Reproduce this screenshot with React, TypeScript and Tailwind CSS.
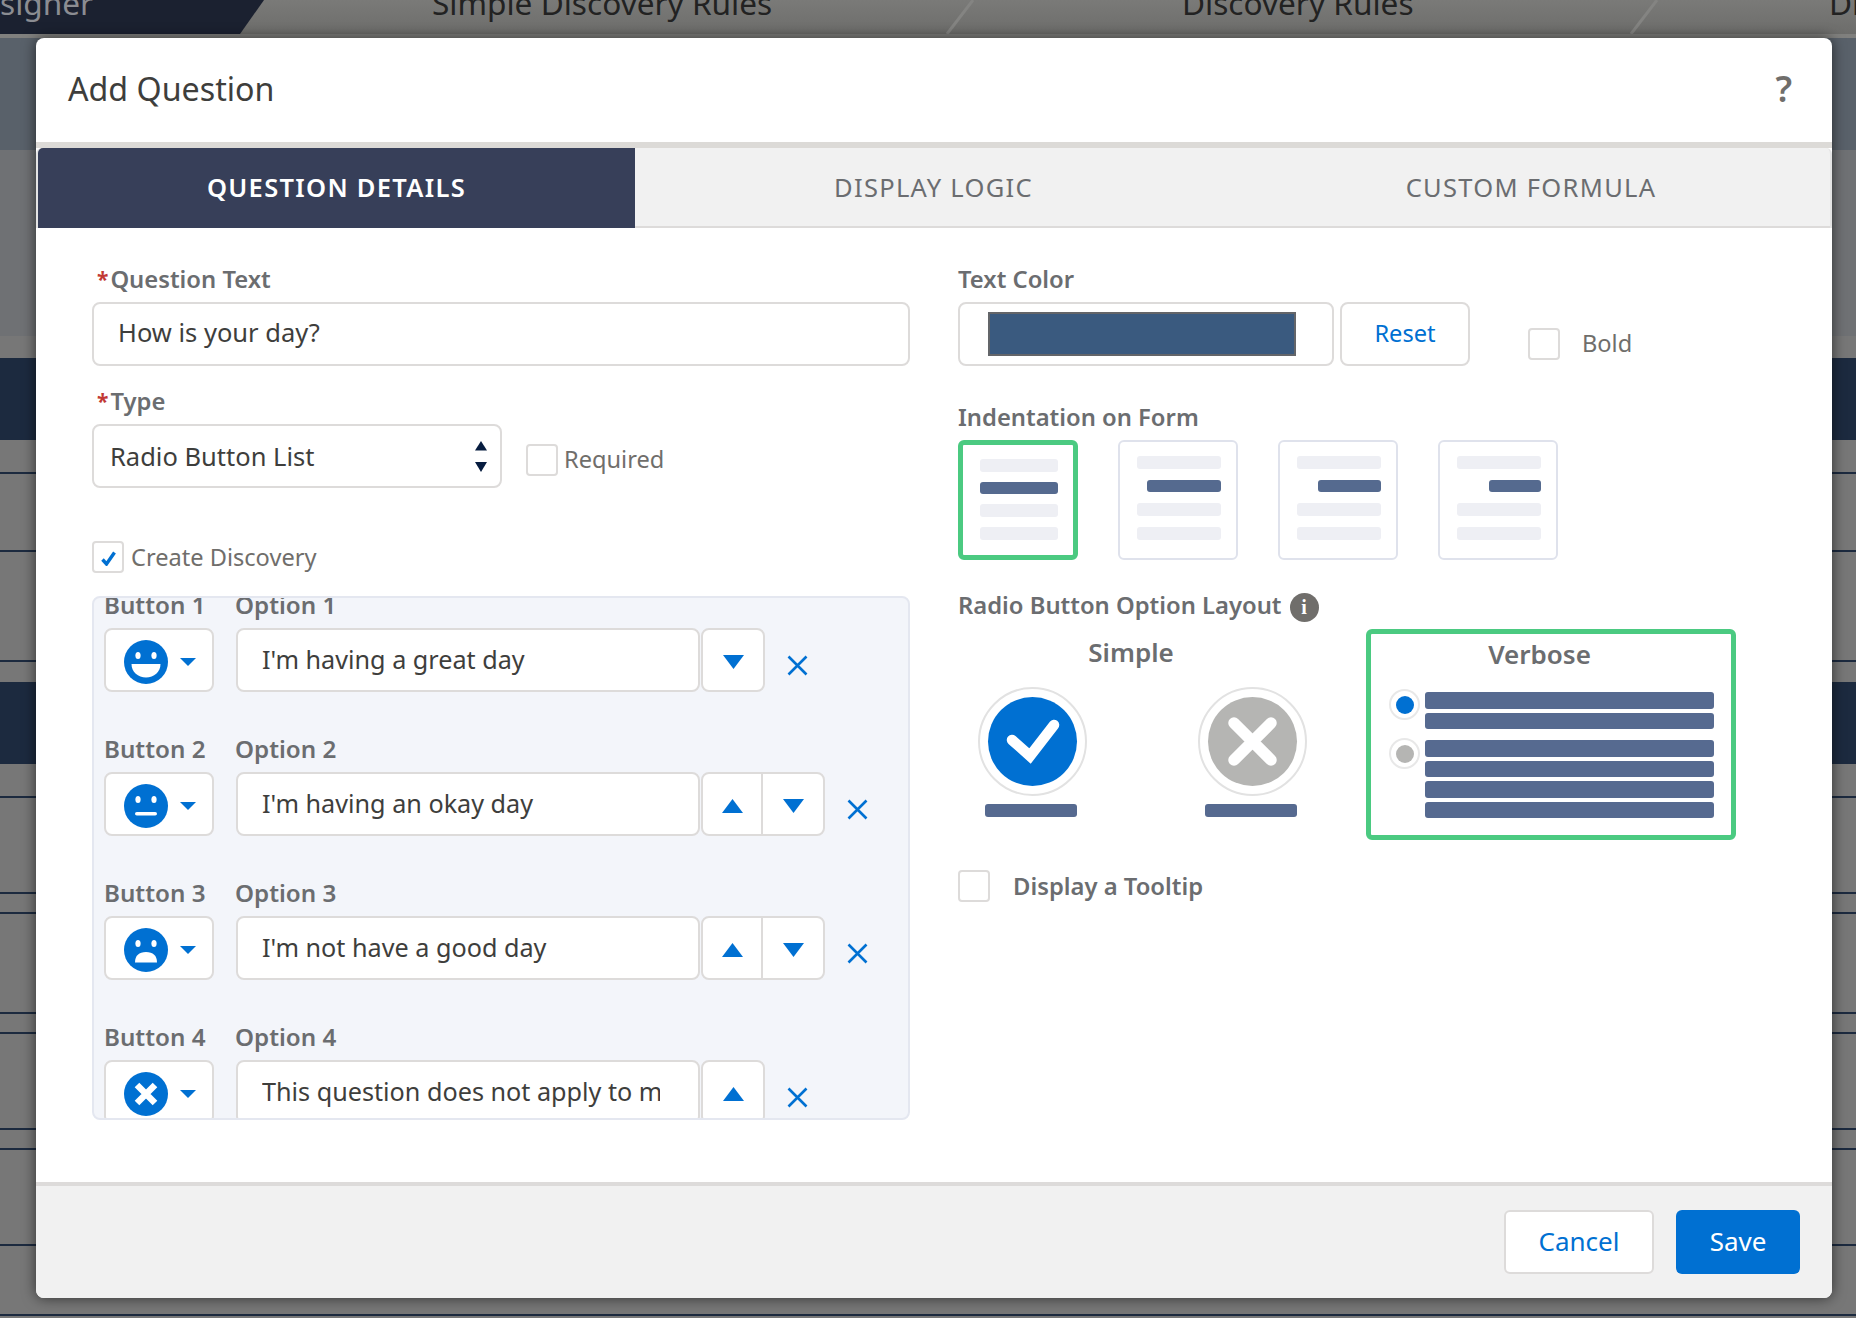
import { ReactNode } from "react"

const BG_ROWS = [
  { h: "h-[112px]", bg: "bg-[#59616a]" },
  { h: "h-[186px]", bg: "bg-[#6f7174]" },
  { h: "h-[22px]", bg: "bg-[#777777]" },
  { h: "h-[82px]", bg: "bg-[#1c2a3f]" },
  { h: "h-[32px]", bg: "bg-[#777777]" },
  { h: "h-[2px]", bg: "bg-[#1c2a3f]" },
  { h: "h-[76px]", bg: "bg-[#777777]" },
  { h: "h-[2px]", bg: "bg-[#1c2a3f]" },
  { h: "h-[108px]", bg: "bg-[#777777]" },
  { h: "h-[2px]", bg: "bg-[#1c2a3f]" },
  { h: "h-[20px]", bg: "bg-[#777777]" },
  { h: "h-[82px]", bg: "bg-[#1c2a3f]" },
  { h: "h-[32px]", bg: "bg-[#777777]" },
  { h: "h-[2px]", bg: "bg-[#1c2a3f]" },
  { h: "h-[94px]", bg: "bg-[#777777]" },
  { h: "h-[2px]", bg: "bg-[#1c2a3f]" },
  { h: "h-[18px]", bg: "bg-[#777777]" },
  { h: "h-[2px]", bg: "bg-[#1c2a3f]" },
  { h: "h-[98px]", bg: "bg-[#777777]" },
  { h: "h-[2px]", bg: "bg-[#1c2a3f]" },
  { h: "h-[18px]", bg: "bg-[#777777]" },
  { h: "h-[2px]", bg: "bg-[#1c2a3f]" },
  { h: "h-[94px]", bg: "bg-[#777777]" },
  { h: "h-[2px]", bg: "bg-[#1c2a3f]" },
  { h: "h-[18px]", bg: "bg-[#777777]" },
  { h: "h-[2px]", bg: "bg-[#1c2a3f]" },
  { h: "h-[94px]", bg: "bg-[#777777]" },
  { h: "h-[2px]", bg: "bg-[#1c2a3f]" },
  { h: "h-[68px]", bg: "bg-[#777777]" },
  { h: "h-[2px]", bg: "bg-[#1c2a3f]" },
]

function NavSlash() {
  return (
    <svg width="30" height="34" className="shrink-0">
      <path d="M28 0 L2 34" stroke="#848482" strokeWidth="3" fill="none" />
    </svg>
  )
}

function Nav() {
  return (
    <div className="h-[38px] overflow-hidden border-b-4 border-[#80807e] bg-gradient-to-b from-[#7a7a78] to-[#6d6d6b] flex text-[31.6px] leading-[30px] text-[#222222] whitespace-nowrap">
      <div className="w-[264px] h-[34px] bg-[#1b2130] text-[#8b8d92] [clip-path:polygon(0_0,100%_0,240px_100%,0_100%)] shrink-0">
        <div className="-mt-[12px]">signer</div>
      </div>
      <div className="w-[168px] shrink-0" />
      <div className="w-[347px] shrink-0 -mt-[12px]">Simple Discovery Rules</div>
      <div className="w-[166px] shrink-0" />
      <NavSlash />
      <div className="w-[207px] shrink-0" />
      <div className="w-[230px] shrink-0 -mt-[12px]">Discovery Rules</div>
      <div className="w-[217px] shrink-0" />
      <NavSlash />
      <div className="w-[170px] shrink-0" />
      <div className="shrink-0 -mt-[12px]">Di</div>
    </div>
  )
}

function Label({ required, children }: { required?: boolean; children: ReactNode }) {
  return (
    <div className="h-[36px] flex items-center text-[23.8px] font-semibold text-[#6b6d70]">
      {required && <span className="text-[#c23934] ml-[5px] mr-[2px] text-[21px] font-bold">*</span>}
      {children}
    </div>
  )
}

function Checkbox({ checked }: { checked?: boolean }) {
  return (
    <div className="w-[32px] h-[32px] shrink-0 rounded-[4px] border-2 border-[#dddbda] bg-white flex items-center justify-center">
      {checked && (
        <svg width="15" height="15" viewBox="0 0 15 15" className="mt-[3px]">
          <path d="M1.5 8.5 L5.5 13 L13.5 1.5" stroke="#0070d2" strokeWidth="3.4" fill="none" />
        </svg>
      )}
    </div>
  )
}

function Face({ kind }: { kind: number }) {
  return (
    <svg width="44" height="44" viewBox="0 0 44 44" className="shrink-0">
      <circle cx="22" cy="22" r="22" fill="#0070d2" />
      {kind < 3 && (
        <>
          <ellipse cx="14" cy="15.5" rx="2.6" ry="3.6" fill="#fff" />
          <ellipse cx="30" cy="15.5" rx="2.6" ry="3.6" fill="#fff" />
        </>
      )}
      {kind === 0 && <path d="M7.5 24h29c0 8-6.5 13.5-14.5 13.5S7.5 32 7.5 24z" fill="#fff" />}
      {kind === 1 && <rect x="11" y="28" width="22" height="3.6" rx="1.8" fill="#fff" />}
      {kind === 2 && <path d="M11 34.5c0-7 4-10.5 11-10.5s11 3.5 11 10.5z" fill="#fff" />}
      {kind === 3 && (
        <path d="M13 13 L31 31 M31 13 L13 31" stroke="#fff" strokeWidth="6.5" fill="none" />
      )}
    </svg>
  )
}

function Arrow({ up }: { up?: boolean }) {
  return (
    <svg width="21" height="14" viewBox="0 0 21 14">
      <polygon points={up ? "10.5,0 21,14 0,14" : "0,0 21,0 10.5,14"} fill="#0070d2" />
    </svg>
  )
}

const OPTIONS = [
  { text: "I'm having a great day", up: false, down: true },
  { text: "I'm having an okay day", up: true, down: true },
  { text: "I'm not have a good day", up: true, down: true },
  { text: "This question does not apply to me", up: true, down: false },
]

function OptionRow({ index, text, up, down }: { index: number; text: string; up: boolean; down: boolean }) {
  return (
    <div className="h-[144px] pl-[10px]">
      <div className="h-[36px] flex items-center text-[24.2px] font-semibold text-[#6b6d70] mb-[5px]">
        <div className="w-[131px]">Button {index + 1}</div>
        <div>Option {index + 1}</div>
      </div>
      <div className="flex items-start">
        <div className="w-[110px] h-[64px] rounded-[8px] border-2 border-[#dddbda] bg-white flex items-center pl-[18px] pt-[4px]">
          <Face kind={index} />
          <svg width="16" height="8" viewBox="0 0 16 8" className="ml-[12px]">
            <polygon points="0,0 16,0 8,8" fill="#0070d2" />
          </svg>
        </div>
        <input
          readOnly
          value={text}
          className="ml-[22px] w-[464px] h-[64px] rounded-[8px] border-2 border-[#dddbda] bg-white pl-[24px] pr-[38px] pb-[3px] text-[25.2px] text-[#3e3e3c] outline-none"
        />
        <div className="ml-[1px] h-[64px] rounded-[8px] border-2 border-[#dddbda] bg-white flex divide-x-2 divide-[#dddbda]">
          {up && (
            <div className="w-[60px] h-full flex items-center justify-center pt-[4px]">
              <Arrow up />
            </div>
          )}
          {down && (
            <div className="w-[60px] h-full flex items-center justify-center pt-[4px]">
              <Arrow />
            </div>
          )}
        </div>
        <svg width="21" height="21" viewBox="0 0 21 21" className="ml-[22px] mt-[27px]">
          <path d="M1.5 1.5 L19.5 19.5 M19.5 1.5 L1.5 19.5" stroke="#0070d2" strokeWidth="2.6" fill="none" />
        </svg>
      </div>
    </div>
  )
}

function IndentCard({ selected, inset }: { selected?: boolean; inset: string }) {
  return (
    <div
      className={
        selected
          ? "w-[120px] h-[120px] rounded-[6px] border-[5px] border-[#4bca81] bg-white pt-[14px] pl-[17px] pr-[15px] flex flex-col gap-[10px]"
          : "w-[120px] h-[120px] rounded-[6px] border-2 border-[#dfe2ec] bg-white pt-[14px] pl-[17px] pr-[15px] flex flex-col gap-[11px]"
      }
    >
      <div className="h-[13px] rounded-[3px] bg-[#eeeff4]" />
      <div className={`h-[12px] rounded-[3px] bg-[#556a8f] ${inset}`} />
      <div className="h-[13px] rounded-[3px] bg-[#eeeff4]" />
      <div className="h-[13px] rounded-[3px] bg-[#eeeff4]" />
    </div>
  )
}

function SimpleIcon({ on }: { on?: boolean }) {
  return (
    <div className="w-[109px] flex flex-col items-center">
      <svg width="109" height="109" viewBox="0 0 109 109">
        <circle cx="54.5" cy="54.5" r="53.5" fill="#fff" stroke="#e2e2e2" strokeWidth="2" />
        <circle cx="54.5" cy="54.5" r="44.5" fill={on ? "#0070d2" : "#b5b5b3"} />
        {on ? (
          <path d="M34 53 L52 69 L76 38" stroke="#fff" strokeWidth="10.5" fill="none" strokeLinecap="round" />
        ) : (
          <path d="M36 36 L73 73 M73 36 L36 73" stroke="#fff" strokeWidth="11.5" fill="none" strokeLinecap="round" />
        )}
      </svg>
      <div className="mt-[8px] mr-[3px] w-[92px] h-[13px] rounded-[3px] bg-[#566a90]" />
    </div>
  )
}

function RadioGroup({ on, lines, offset }: { on?: boolean; lines: number; offset: string }) {
  return (
    <div className="flex items-start">
      <div className="w-[31px] h-[31px] shrink-0 rounded-full border-2 border-[#e8e8e8] bg-white flex items-center justify-center">
        <div className={on ? "w-[18px] h-[18px] rounded-full bg-[#0070d2]" : "w-[18px] h-[18px] rounded-full bg-[#b5b5b3]"} />
      </div>
      <div className={`ml-[5px] w-[289px] flex flex-col gap-[4px] ${offset}`}>
        {Array.from({ length: lines }).map((_, i) => (
          <div key={i} className="h-[16.5px] rounded-[3px] bg-[#566a90]" />
        ))}
      </div>
    </div>
  )
}

function LeftColumn() {
  return (
    <div className="w-[818px] shrink-0">
      <Label required>Question Text</Label>
      <input
        readOnly
        value="How is your day?"
        className="mt-[4px] w-full h-[64px] rounded-[8px] border-2 border-[#dddbda] bg-white pl-[24px] pb-[4px] text-[25.5px] text-[#3e3e3c] outline-none"
      />
      <div className="mt-[18px]">
        <Label required>Type</Label>
      </div>
      <div className="mt-[4px] flex items-start">
        <div className="w-[410px] h-[64px] rounded-[8px] border-2 border-[#dddbda] bg-white flex items-center justify-between pl-[16px] pr-[13px] text-[25.5px] text-[#3e3e3c]">
          <span>Radio Button List</span>
          <svg width="12" height="31" viewBox="0 0 12 31">
            <polygon points="6,0 12,9.5 0,9.5" fill="#061c3f" />
            <polygon points="0,21 12,21 6,31" fill="#061c3f" />
          </svg>
        </div>
        <div className="ml-[24px] mt-[20px]">
          <Checkbox />
        </div>
        <span className="ml-[6px] mt-[20px] text-[23.6px] leading-[30px] text-[#706e6b]">Required</span>
      </div>
      <div className="mt-[53px] flex items-center">
        <Checkbox checked />
        <span className="ml-[7px] text-[23.6px] leading-[30px] text-[#706e6b]">Create Discovery</span>
      </div>
      <div className="mt-[23px] h-[524px] rounded-[8px] border-2 border-[#e4e7f0] bg-[#f3f5fa] overflow-hidden">
        <div className="-mt-[11px]">
          {OPTIONS.map((o, i) => (
            <OptionRow key={i} index={i} text={o.text} up={o.up} down={o.down} />
          ))}
        </div>
      </div>
    </div>
  )
}

function RightColumn() {
  return (
    <div className="ml-[48px] flex-1">
      <Label>Text Color</Label>
      <div className="mt-[4px] flex items-start">
        <div className="w-[376px] h-[64px] rounded-[8px] border-2 border-[#dddbda] bg-white pl-[28px] pt-[8px]">
          <div className="w-[308px] h-[44px] border-[2.5px] border-[#636569] bg-[#3a5a7f]" />
        </div>
        <div className="ml-[6px] w-[130px] h-[64px] rounded-[8px] border-2 border-[#dddbda] bg-white flex items-center justify-center text-[23.6px] text-[#0070d2]">
          Reset
        </div>
        <div className="ml-[58px] mt-[26px]">
          <Checkbox />
        </div>
        <span className="ml-[22px] mt-[26px] text-[23.6px] leading-[30px] text-[#706e6b]">Bold</span>
      </div>

      <div className="mt-[34px]">
        <Label>Indentation on Form</Label>
      </div>
      <div className="mt-[4px] flex gap-[40px]">
        <IndentCard selected inset="" />
        <IndentCard inset="ml-[10px]" />
        <IndentCard inset="ml-[21px]" />
        <IndentCard inset="ml-[32px]" />
      </div>

      <div className="mt-[28px] h-[36px] flex items-center text-[23.8px] font-semibold text-[#6b6d70]">
        Radio Button Option Layout
        <div className="ml-[8px] mt-[2px] w-[29px] h-[29px] rounded-full bg-[#706e6b] text-white text-[20px] font-bold flex items-center justify-center font-['Liberation_Serif',serif]">
          i
        </div>
      </div>

      <div className="mt-[5px] flex items-start">
        <div className="w-[408px] shrink-0">
          <div className="w-[346px] h-[48px] pb-[2px] flex items-center justify-center text-[26px] font-semibold text-[#6b6d70]">
            Simple
          </div>
          <div className="mt-[10px] ml-[20px] flex gap-[111px]">
            <SimpleIcon on />
            <SimpleIcon />
          </div>
        </div>
        <div className="w-[370px] h-[211px] shrink-0 rounded-[6px] border-[5px] border-[#4bca81] bg-white pl-[18px]">
          <div className="w-[301px] h-[42px] pb-[2px] flex items-center justify-center text-[26px] font-semibold text-[#6b6d70]">
            Verbose
          </div>
          <div className="mt-[13px] flex flex-col gap-[9px]">
            <RadioGroup on lines={2} offset="mt-[3px]" />
            <RadioGroup lines={4} offset="mt-[2px]" />
          </div>
        </div>
      </div>

      <div className="mt-[30px] flex items-center">
        <Checkbox />
        <span className="ml-[23px] text-[23.8px] leading-[30px] font-semibold text-[#6b6d70]">Display a Tooltip</span>
      </div>
    </div>
  )
}

export default function App() {
  return (
    <div className="relative w-[1856px] h-[1318px] overflow-hidden bg-[#777777] font-['Noto_Sans',sans-serif]">
      <Nav />
      {BG_ROWS.map((r, i) => (
        <div key={i} className={`${r.h} ${r.bg}`} />
      ))}

      {/* modal */}
      <div className="absolute left-[36px] top-[38px] w-[1796px] h-[1260px] rounded-[8px] bg-white shadow-[0_0_14px_rgba(0,0,0,0.6)] flex flex-col overflow-hidden">
        <div className="h-[104px] shrink-0 flex items-center justify-between pl-[32px] pr-[40px] pb-[2px]">
          <span className="text-[32.2px] text-[#3e3e3c]">Add Question</span>
          <span className="text-[36px] font-semibold text-[#706e6b]">?</span>
        </div>
        <div className="h-[6px] shrink-0 bg-[#dcdad7]" />
        <div className="h-[80px] shrink-0 flex rounded-t-[6px] border-x-2 border-[#e4e4e4] text-[25.5px] tracking-[1.3px] bg-[#f1f1f1]">
          <div className="w-[597px] pb-[2px] flex items-center justify-center rounded-tl-[5px] bg-[#373f59] text-white font-semibold">
            QUESTION DETAILS
          </div>
          <div className="w-[597px] flex items-center justify-center border-b-2 border-[#dddbda] text-[#6b6d70]">
            DISPLAY LOGIC
          </div>
          <div className="flex-1 flex items-center justify-center border-b-2 border-[#dddbda] text-[#6b6d70]">
            CUSTOM FORMULA
          </div>
        </div>

        <div className="flex-1 flex pt-[34px] pl-[56px]">
          <LeftColumn />
          <RightColumn />
        </div>

        <div className="h-[116px] shrink-0 border-t-4 border-[#dddbda] bg-[#f1f1f1] flex items-center justify-end gap-[22px] pr-[32px] text-[26px]">
          <div className="w-[150px] h-[64px] pb-[2px] rounded-[6px] border-2 border-[#dddbda] bg-white flex items-center justify-center text-[#0070d2]">
            Cancel
          </div>
          <div className="w-[124px] h-[64px] pb-[2px] rounded-[6px] bg-[#0070d2] flex items-center justify-center text-white">
            Save
          </div>
        </div>
      </div>
    </div>
  )
}
